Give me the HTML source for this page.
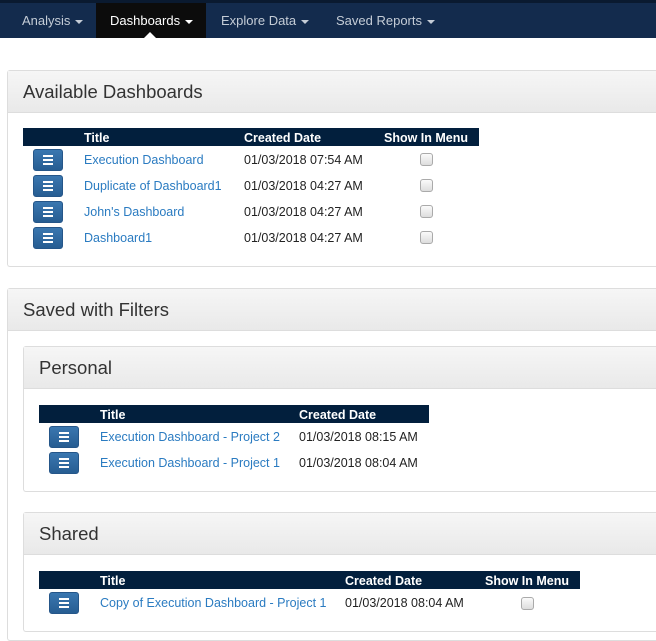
<!DOCTYPE html>
<html><head><meta charset="utf-8"><style>
*{box-sizing:border-box;margin:0;padding:0}
html,body{width:656px;height:641px;overflow:hidden}
body{background:#fff;font-family:"Liberation Sans",sans-serif;font-size:12.5px;color:#222;position:relative}
.a{position:absolute}
.nav{left:0;top:0;width:656px;height:38px;background:#132b4d;border-top:3px solid #0a1a30}
.nav span{position:absolute;top:10px;color:#c4ccd6;font-size:13px}
.car{display:inline-block;width:0;height:0;border-left:4px solid transparent;border-right:4px solid transparent;border-top:4px solid currentColor;vertical-align:middle;margin-left:5px}
.panel{border:1px solid #ddd;border-radius:3px;border-right:none;background:#fff}
.ph{position:absolute;left:0;right:0;top:0;height:42px;background:linear-gradient(#f6f6f6,#e9e9e9);border-bottom:1px solid #ddd}
.ph div{position:absolute;left:15px;top:10px;font-size:18.5px;color:#333}
.th{background:#021f3d;color:#fff;font-weight:bold;height:18px}
.th span{position:absolute;top:3px;font-size:12.5px}
.btn{width:30px;height:22px;border-radius:3px;background:linear-gradient(#3a77b0,#275d92);border:1px solid #255689}
.btn:after{content:"";position:absolute;left:9px;top:5px;width:10px;height:2px;background:#fff;box-shadow:0 4px 0 #fff,0 8px 0 #fff}
.lk{color:#2a7bc1}
.cb{width:13px;height:13px;border:1px solid #aaa;border-radius:3px;background:linear-gradient(#fafafa,#ddd)}
</style></head><body>
<div class="a nav">
<span style="left:22px">Analysis<i class="car"></i></span>
<div class="a" style="left:96px;top:0;width:110px;height:35px;background:#0c0c0c"></div>
<span style="left:110px;color:#fff">Dashboards<i class="car"></i></span>
<span style="left:221px">Explore Data<i class="car"></i></span>
<span style="left:336px">Saved Reports<i class="car"></i></span>
<div class="a" style="left:144px;top:29px;width:0;height:0;border-left:6px solid transparent;border-right:6px solid transparent;border-bottom:6px solid #fff"></div>
</div>

<div class="a panel" style="left:7px;top:70px;width:660px;height:197px"><div class="ph"><div>Available Dashboards</div></div></div>
<div class="a th" style="left:23px;top:128px;width:456px"><span style="left:61px">Title</span><span style="left:221px">Created Date</span><span style="left:361px">Show In Menu</span></div>

<div class="a btn" style="left:33px;top:149px"></div><div class="a lk" style="left:84px;top:153px">Execution Dashboard</div><div class="a" style="left:244px;top:153px">01/03/2018 07:54 AM</div><div class="a cb" style="left:420px;top:153px"></div>
<div class="a btn" style="left:33px;top:175px"></div><div class="a lk" style="left:84px;top:179px">Duplicate of Dashboard1</div><div class="a" style="left:244px;top:179px">01/03/2018 04:27 AM</div><div class="a cb" style="left:420px;top:179px"></div>
<div class="a btn" style="left:33px;top:201px"></div><div class="a lk" style="left:84px;top:205px">John's Dashboard</div><div class="a" style="left:244px;top:205px">01/03/2018 04:27 AM</div><div class="a cb" style="left:420px;top:205px"></div>
<div class="a btn" style="left:33px;top:227px"></div><div class="a lk" style="left:84px;top:231px">Dashboard1</div><div class="a" style="left:244px;top:231px">01/03/2018 04:27 AM</div><div class="a cb" style="left:420px;top:231px"></div>

<div class="a panel" style="left:7px;top:288px;width:660px;height:353px"><div class="ph"><div>Saved with Filters</div></div></div>

<div class="a panel" style="left:23px;top:346px;width:640px;height:146px"><div class="ph"><div>Personal</div></div></div>
<div class="a th" style="left:39px;top:405px;width:390px"><span style="left:61px">Title</span><span style="left:260px">Created Date</span></div>
<div class="a btn" style="left:49px;top:426px"></div><div class="a lk" style="left:100px;top:430px">Execution Dashboard - Project 2</div><div class="a" style="left:299px;top:430px">01/03/2018 08:15 AM</div>
<div class="a btn" style="left:49px;top:452px"></div><div class="a lk" style="left:100px;top:456px">Execution Dashboard - Project 1</div><div class="a" style="left:299px;top:456px">01/03/2018 08:04 AM</div>

<div class="a panel" style="left:23px;top:512px;width:640px;height:120px"><div class="ph"><div>Shared</div></div></div>
<div class="a th" style="left:39px;top:571px;width:541px"><span style="left:61px">Title</span><span style="left:306px">Created Date</span><span style="left:446px">Show In Menu</span></div>
<div class="a btn" style="left:49px;top:592px"></div><div class="a lk" style="left:100px;top:596px">Copy of Execution Dashboard - Project 1</div><div class="a" style="left:345px;top:596px">01/03/2018 08:04 AM</div><div class="a cb" style="left:521px;top:597px"></div>
</body></html>
